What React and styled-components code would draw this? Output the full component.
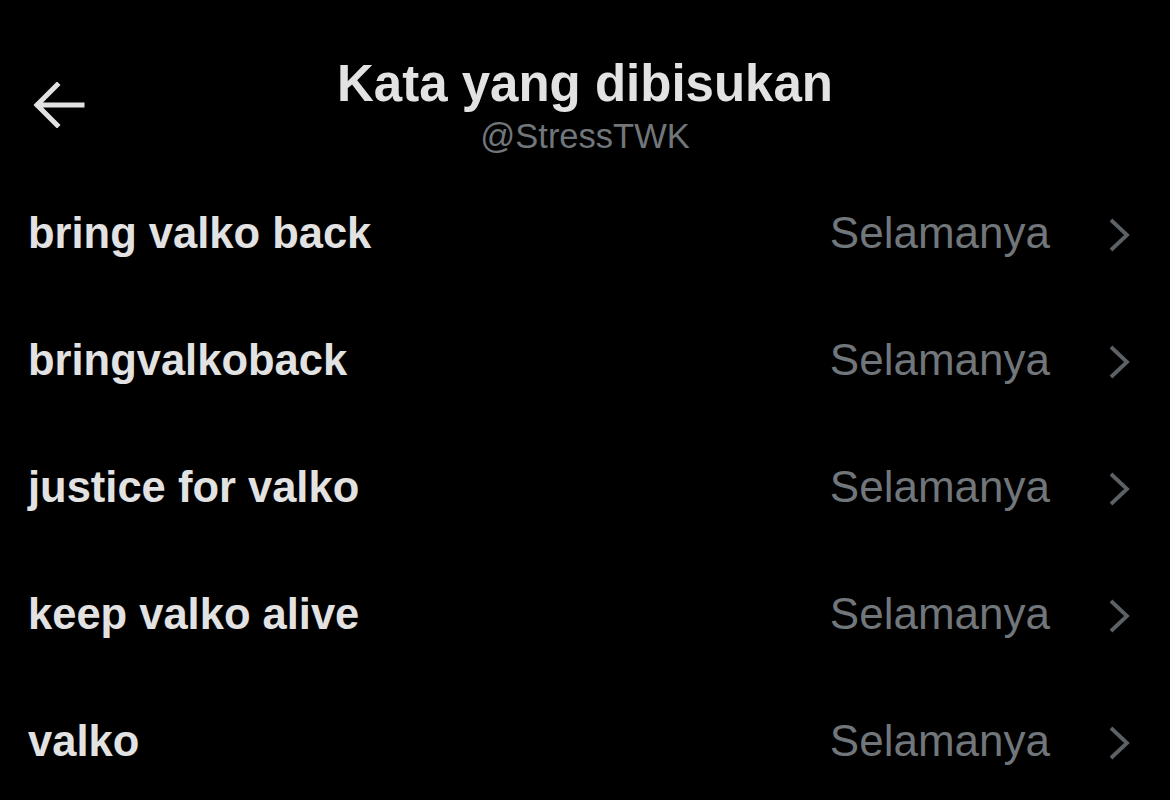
import React from "react";
import styled, { createGlobalStyle } from "styled-components";

const Global = createGlobalStyle`
  html, body { margin: 0; padding: 0; background: #000; }
  body { font-family: "Liberation Sans", Arial, sans-serif; }
`;

const Page = styled.div`
  width: 1170px;
  height: 800px;
  background: #000;
  overflow: hidden;
`;

const Header = styled.header`
  display: grid;
  grid-template-columns: 1fr auto 1fr;
  padding: 58px 0 16px;
`;

const BackButton = styled.button`
  justify-self: start;
  align-self: start;
  margin: 24px 0 0 33px;
  padding: 0;
  border: 0;
  background: none;
  display: flex;
  color: #e2e2e2;
`;

const TitleBlock = styled.div`
  display: flex;
  flex-direction: column;
  align-items: center;
  gap: 10px;
`;

const Title = styled.h1`
  margin: 0;
  font-size: 51px;
  line-height: 1;
  font-weight: 700;
  color: #e2e2e2;
`;

const Handle = styled.div`
  font-size: 34.5px;
  line-height: 1;
  color: #71767b;
`;

const List = styled.ul`
  list-style: none;
  margin: 0;
  padding: 0;
`;

const Row = styled.li`
  height: 127px;
  display: flex;
  align-items: center;
  padding: 0 40px 0 28px;
`;

const Word = styled.span`
  flex: 1;
  font-size: 43.5px;
  font-weight: 700;
  color: #e2e2e2;
`;

const Duration = styled.span`
  font-size: 44px;
  color: #71767b;
  margin-right: 58px;
`;

const Chevron = styled.svg`
  width: 22px;
  height: 34px;
  margin-top: 3px;
  color: #5c6166;
`;

const words = [
  "bring valko back",
  "bringvalkoback",
  "justice for valko",
  "keep valko alive",
  "valko",
];

export default function App() {
  return (
    <Page>
      <Global />
      <Header>
        <BackButton aria-label="Kembali">
          <svg width="52" height="46" viewBox="0 0 52 46" fill="none">
            <path
              d="M49 23H5M24 3L4 23l20 20"
              stroke="currentColor"
              strokeWidth="5"
              strokeLinecap="square"
            />
          </svg>
        </BackButton>
        <TitleBlock>
          <Title>Kata yang dibisukan</Title>
          <Handle>@StressTWK</Handle>
        </TitleBlock>
        <div />
      </Header>
      <List>
        {words.map((w) => (
          <Row key={w}>
            <Word>{w}</Word>
            <Duration>Selamanya</Duration>
            <Chevron viewBox="0 0 22 34" fill="none">
              <path
                d="M3 2l16 15L3 32"
                stroke="currentColor"
                strokeWidth="3.8"
              />
            </Chevron>
          </Row>
        ))}
      </List>
    </Page>
  );
}
